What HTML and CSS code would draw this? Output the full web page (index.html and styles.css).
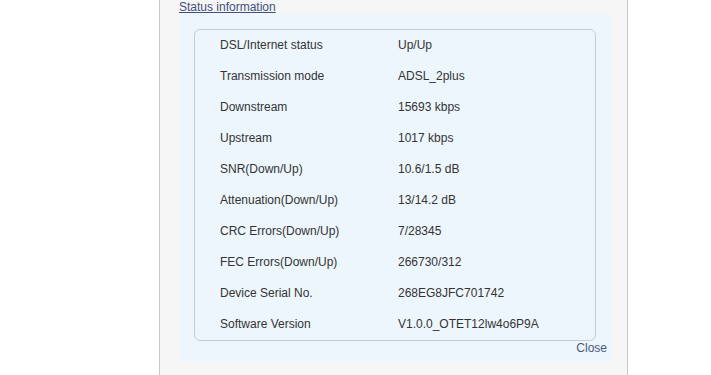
FILE: index.html
```html
<!DOCTYPE html>
<html lang="en">
<head>
    <meta charset="UTF-8">
    <title>Status information</title>
    <link rel="stylesheet" href="styles.css">
</head>
<body>
    <div class="page">
        <div class="side"></div>
        <div class="panel">
            <a href="#" class="title-link">Status information</a>
            <div class="status-area">
                <table class="status-table">
                    <tr><td class="label">DSL/Internet status</td><td>Up/Up</td></tr>
                    <tr><td class="label">Transmission mode</td><td>ADSL_2plus</td></tr>
                    <tr><td class="label">Downstream</td><td>15693 kbps</td></tr>
                    <tr><td class="label">Upstream</td><td>1017 kbps</td></tr>
                    <tr><td class="label">SNR(Down/Up)</td><td>10.6/1.5 dB</td></tr>
                    <tr><td class="label">Attenuation(Down/Up)</td><td>13/14.2 dB</td></tr>
                    <tr><td class="label">CRC Errors(Down/Up)</td><td>7/28345</td></tr>
                    <tr><td class="label">FEC Errors(Down/Up)</td><td>266730/312</td></tr>
                    <tr><td class="label">Device Serial No.</td><td>268EG8JFC701742</td></tr>
                    <tr><td class="label">Software Version</td><td>V1.0.0_OTET12lw4o6P9A</td></tr>
                </table>
                <div class="actions">
                    <a href="#" class="close-link">Close</a>
                </div>
            </div>
        </div>
    </div>
</body>
</html>
```

FILE: styles.css
```css
body {
    margin: 0;
    padding: 0;
    background-color: #ffffff;
    font-family: "Liberation Sans", Arial, sans-serif;
    font-size: 12px;
    color: #333333;
}

.page {
    display: flex;
    height: 375px;
    overflow: hidden;
}

.side {
    width: 159px;
    flex-shrink: 0;
}

.panel {
    width: 448px;
    padding: 0 0 0 19px;
    background-color: #f6f6f6;
    border-left: 1px solid #c9c9c9;
    border-right: 1px solid #c9c9c9;
}

.title-link {
    display: block;
    height: 14px;
    line-height: 14px;
    color: #3e4f82;
    text-decoration: underline;
}

.status-area {
    width: 433px;
    margin-left: 1px;
    padding: 15px 17px 4px 14px;
    box-sizing: border-box;
    background-color: #eef6fd;
}

.status-table {
    width: 100%;
    border-collapse: separate;
    border-spacing: 0;
    border: 1px solid #c6cbd3;
    border-radius: 6px;
}

.status-table td {
    height: 30px;
    padding: 0 0 1px 0;
    vertical-align: middle;
}

.status-table td.label {
    width: 178px;
    padding-left: 25px;
}

.actions {
    text-align: right;
    margin-right: -11px;
    height: 16px;
    line-height: 14px;
}

.close-link {
    color: #4a5878;
    text-decoration: none;
}
```
